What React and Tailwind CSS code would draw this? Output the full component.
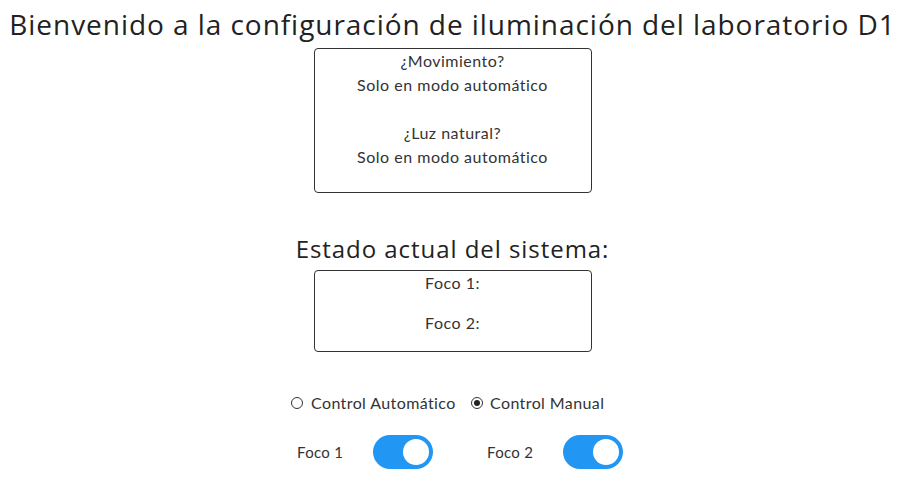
import React from "react";

function Toggle() {
  return (
    <span className="relative inline-block shrink-0 w-[60px] h-[34px] rounded-full bg-[#2196F3]">
      <span className="absolute left-[30px] top-[4px] w-[26px] h-[26px] rounded-full bg-white" />
    </span>
  );
}

function Radio({ checked }) {
  return (
    <span className="inline-flex shrink-0 items-center justify-center w-[12px] h-[12px] rounded-full border border-[#333] bg-white">
      {checked && <span className="w-[6px] h-[6px] rounded-full bg-[#222]" />}
    </span>
  );
}

export default function App() {
  const body = { fontFamily: "Lato, 'Noto Sans', sans-serif" };
  const head = { fontFamily: "'Open Sans', 'Noto Sans', sans-serif" };
  return (
    <div className="w-[905px] h-[484px] bg-white text-[#333] flex flex-col items-center" style={body}>
      <h1 className="pt-[7px] text-[28px] leading-[34px] tracking-[0.95px] text-[#222] whitespace-nowrap" style={head}>
        Bienvenido a la configuración de iluminación del laboratorio D1
      </h1>
      <div className="mt-[7px] w-[278px] border border-[#333] rounded-[4px] text-center text-[16px] leading-[24px] tracking-[0.5px] pb-[23px]">
        <p>¿Movimiento?</p>
        <p>Solo en modo automático</p>
        <p>&nbsp;</p>
        <p>¿Luz natural?</p>
        <p>Solo en modo automático</p>
      </div>
      <h2 className="mt-[41px] text-[24px] leading-[30px] tracking-[0.95px] text-[#222] whitespace-nowrap" style={head}>
        Estado actual del sistema:
      </h2>
      <div className="mt-[6px] w-[278px] border border-[#333] rounded-[4px] text-center text-[16px] leading-[24px] tracking-[0.5px]">
        <p className="mb-4">Foco 1:</p>
        <p className="mb-4">Foco 2:</p>
      </div>
      <div className="mt-[39px] mr-[11px] w-[312px] h-[24px] flex items-center text-[16px] tracking-[0.4px] whitespace-nowrap">
        <Radio />
        <span className="ml-[8px] w-[160px] shrink-0">Control Automático</span>
        <Radio checked />
        <span className="ml-[7px] shrink-0">Control Manual</span>
      </div>
      <div className="mt-[20px] ml-[15px] w-[326px] flex items-center text-[15px] tracking-[0.3px] whitespace-nowrap">
        <span className="w-[76px] shrink-0">Foco 1</span>
        <Toggle />
        <span className="ml-[54px] w-[76px] shrink-0">Foco 2</span>
        <Toggle />
      </div>
    </div>
  );
}
